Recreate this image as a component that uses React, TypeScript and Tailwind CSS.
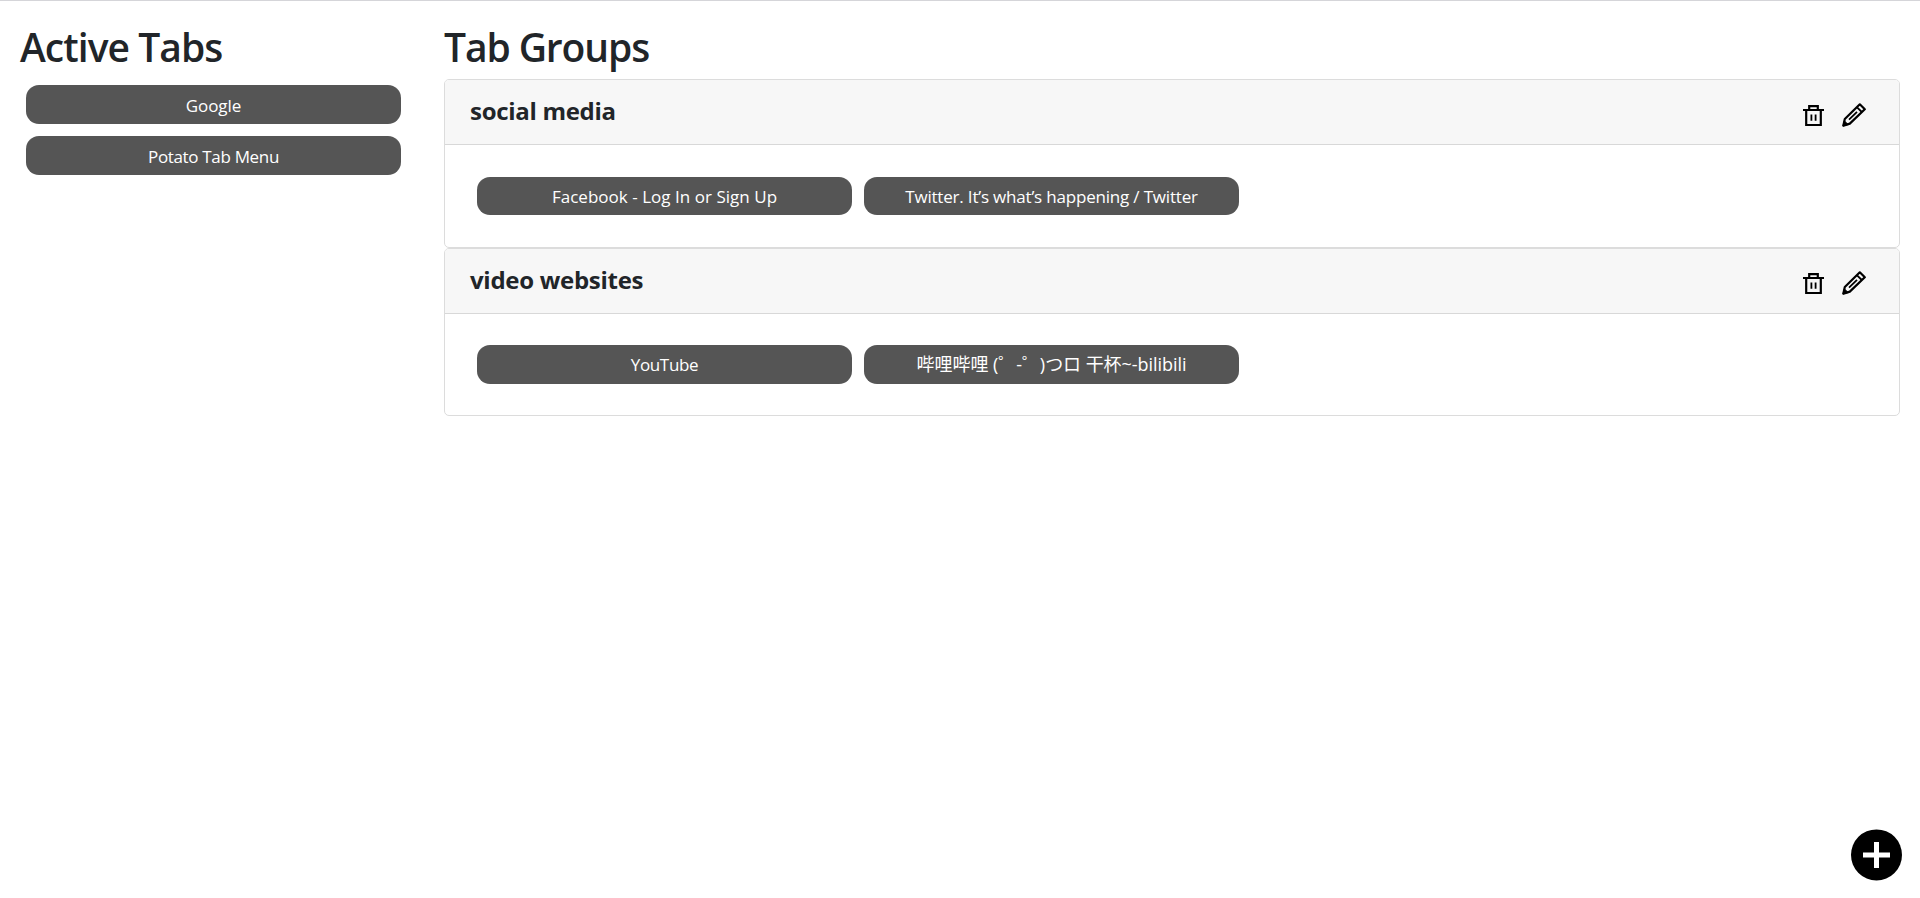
import React from "react";

type Tab = { title: string; className: string };
type Group = { name: string; nameClass: string; iconsClass: string; bodyClass: string; tabs: Tab[] };

const activeTabs: Tab[] = [
  { title: "Google", className: "h-[39px] pt-[2px] tracking-[-0.1px]" },
  { title: "Potato Tab Menu", className: "h-[39px] pt-[2px] tracking-[-0.33px]" },
];

const groups: Group[] = [
  {
    name: "social media",
    nameClass: "tracking-[-0.3px]",
    iconsClass: "pt-[23px]",
    bodyClass: "h-[102px] pt-8",
    tabs: [
      { title: "Facebook - Log In or Sign Up", className: "h-[38px] pt-px tracking-[0.03px]" },
      { title: "Twitter. It’s what’s happening / Twitter", className: "h-[38px] pt-px tracking-[-0.19px]" },
    ],
  },
  {
    name: "video websites",
    nameClass: "tracking-[-0.28px]",
    iconsClass: "pt-[22px]",
    bodyClass: "h-[101px] pt-[31px]",
    tabs: [
      { title: "YouTube", className: "h-[39px] pt-px tracking-[-0.35px]" },
      { title: "哔哩哔哩 (゜-゜)つロ 干杯~-bilibili", className: "h-[39px] text-[18px] tracking-[-0.05px]" },
    ],
  },
];

function TrashIcon() {
  return (
    <svg className="h-[22px] w-[21px]" viewBox="0 0 21 22" fill="none" stroke="#000" strokeWidth="2">
      <path d="M0 5H21" />
      <path d="M6.2 5V1.1H14.8V5M3.2 5V20H17.8V5" strokeWidth="2.2" />
      <path d="M8.4 9.5V15.7M12.6 9.5V15.7" strokeWidth="1.8" />
    </svg>
  );
}

function PencilIcon() {
  return (
    <svg className="h-6 w-6" viewBox="0 0 24 24" fill="none" stroke="#000" strokeWidth="2.2" strokeLinejoin="round">
      <path d="M1.3 22.7L2.8 16L17.8 1.3L22.8 6.2L7.8 20.6Z" />
      <path d="M14.8 4.2L19.8 9M7 16.6L15 8.9" strokeWidth="1.8" />
      <path d="M1 23L2.3 17.8L6.2 21.6Z" fill="#000" strokeWidth="1" />
    </svg>
  );
}

function TabPill({ tab }: { tab: Tab }) {
  return (
    <div
      className={`flex w-[375px] items-center justify-center rounded-[13px] bg-[#555] text-[17px] whitespace-nowrap text-white ${tab.className}`}
    >
      <span>{tab.title}</span>
    </div>
  );
}

function GroupCard({ group }: { group: Group }) {
  return (
    <section className="overflow-hidden rounded-[5px] border border-[#dcdcdc]">
      <header className="flex h-[65px] items-start justify-between border-b border-[#d8d8d8] bg-[#f7f7f7] pr-[33px] pl-[25px]">
        <h2 className={`pt-[13px] text-[24px] leading-[36px] font-bold ${group.nameClass}`}>{group.name}</h2>
        <div className={`flex gap-[18px] ${group.iconsClass}`}>
          <button aria-label="Delete group" className="pt-[2px]">
            <TrashIcon />
          </button>
          <button aria-label="Edit group">
            <PencilIcon />
          </button>
        </div>
      </header>
      <div className={`flex items-start gap-3 px-8 ${group.bodyClass}`}>
        {group.tabs.map((tab) => (
          <TabPill key={tab.title} tab={tab} />
        ))}
      </div>
    </section>
  );
}

export default function App() {
  return (
    <div className="relative flex h-[898px] border-t border-[#d5d5d9] bg-white font-['Open_Sans','Noto_Sans_CJK_SC',sans-serif] text-[#212529]">
      <aside className="w-[444px] pt-[22px] pl-[20px]">
        <h1 className="h-[62px] text-[39px] leading-[48px] font-semibold tracking-[-0.95px]">Active Tabs</h1>
        <div className="flex flex-col gap-3 pl-[6px]">
          {activeTabs.map((tab) => (
            <TabPill key={tab.title} tab={tab} />
          ))}
        </div>
      </aside>
      <main className="w-[1456px] pt-[22px]">
        <h1 className="h-[56px] text-[39px] leading-[48px] font-semibold tracking-[-1.1px]">Tab Groups</h1>
        {groups.map((group) => (
          <GroupCard key={group.name} group={group} />
        ))}
      </main>
      <button aria-label="Add group" className="absolute top-[828px] left-[1851px]">
        <svg className="h-[52px] w-[51px]" viewBox="0 0 51 52">
          <circle cx="25.5" cy="25.9" r="25.5" fill="#000" />
          <path d="M12 26H39M25.5 13V39" stroke="#fff" strokeWidth="5" />
        </svg>
      </button>
    </div>
  );
}
